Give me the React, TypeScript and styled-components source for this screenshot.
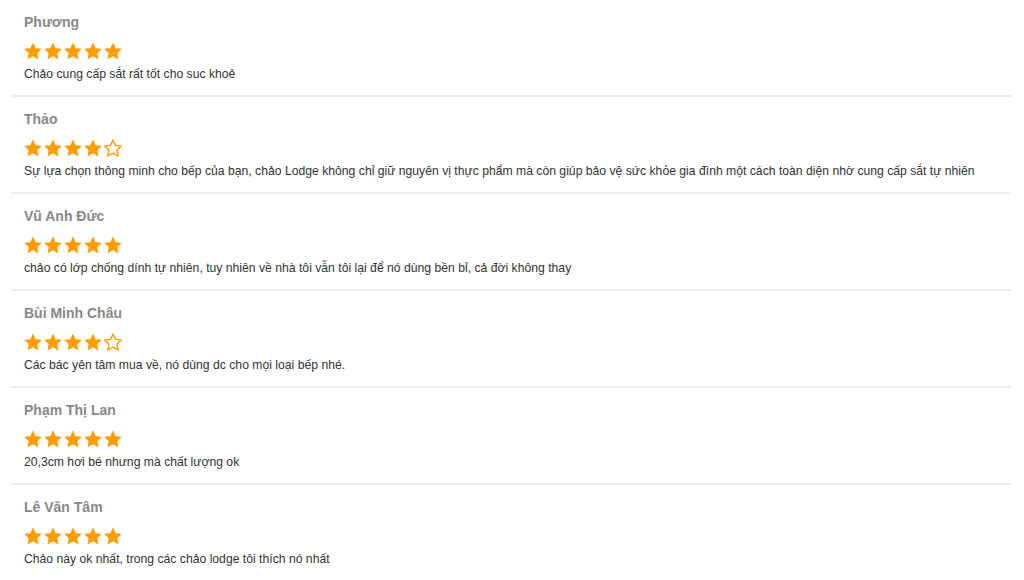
import React from "react";
import styled, { createGlobalStyle } from "styled-components";

const Global = createGlobalStyle`
  html, body { margin: 0; padding: 0; background: #fff; }
  body { font-family: "Liberation Sans", Arial, sans-serif; }
`;

const List = styled.div`
  padding: 0 13px 0 11px;
  width: 1000px;
`;

const Item = styled.div`
  padding: 11px 13px 12px;
  border-bottom: 2px solid #ececec;
  display: flex;
  flex-direction: column;
`;

const Name = styled.div`
  font-size: 14px;
  font-weight: bold;
  color: #888;
  line-height: 22px;
`;

const Stars = styled.div`
  display: flex;
  gap: 2px;
  margin-top: 9px;
  height: 18px;
`;

const Comment = styled.div`
  font-size: 12.2px;
  color: #333;
  line-height: 18px;
  margin-top: 5px;
`;

const STAR = "M12 1.8l3.1 6.6 7.1.9-5.2 4.9 1.3 7.1L12 17.8l-6.3 3.5 1.3-7.1L1.8 9.3l7.1-.9z";

function Star({ filled }: { filled: boolean }) {
  return (
    <svg width="18" height="18" viewBox="1 1 22 21.2">
      <path
        d={STAR}
        fill={filled ? "#ff9c00" : "none"}
        stroke="#ff9c00"
        strokeWidth={filled ? 0.6 : 1.7}
        strokeLinejoin="round"
      />
    </svg>
  );
}

const reviews = [
  { name: "Phương", stars: 5, text: "Chảo cung cấp sắt rất tốt cho suc khoẻ" },
  { name: "Thảo", stars: 4, text: "Sự lựa chọn thông minh cho bếp của bạn, chảo Lodge không chỉ giữ nguyên vị thực phẩm mà còn giúp bảo vệ sức khỏe gia đình một cách toàn diện nhờ cung cấp sắt tự nhiên" },
  { name: "Vũ Anh Đức", stars: 5, text: "chảo có lớp chống dính tự nhiên, tuy nhiên về nhà tôi vẫn tôi lại để nó dùng bền bỉ, cả đời không thay" },
  { name: "Bùi Minh Châu", stars: 4, text: "Các bác yên tâm mua về, nó dùng dc cho mọi loại bếp nhé." },
  { name: "Phạm Thị Lan", stars: 5, text: "20,3cm hơi bé nhưng mà chất lượng ok" },
  { name: "Lê Văn Tâm", stars: 5, text: "Chảo này ok nhất, trong các chảo lodge tôi thích nó nhất" },
];

export default function App() {
  return (
    <>
      <Global />
      <List>
        {reviews.map((r) => (
          <Item key={r.name}>
            <Name>{r.name}</Name>
            <Stars>
              {[0, 1, 2, 3, 4].map((i) => (
                <Star key={i} filled={i < r.stars} />
              ))}
            </Stars>
            <Comment>{r.text}</Comment>
          </Item>
        ))}
      </List>
    </>
  );
}
